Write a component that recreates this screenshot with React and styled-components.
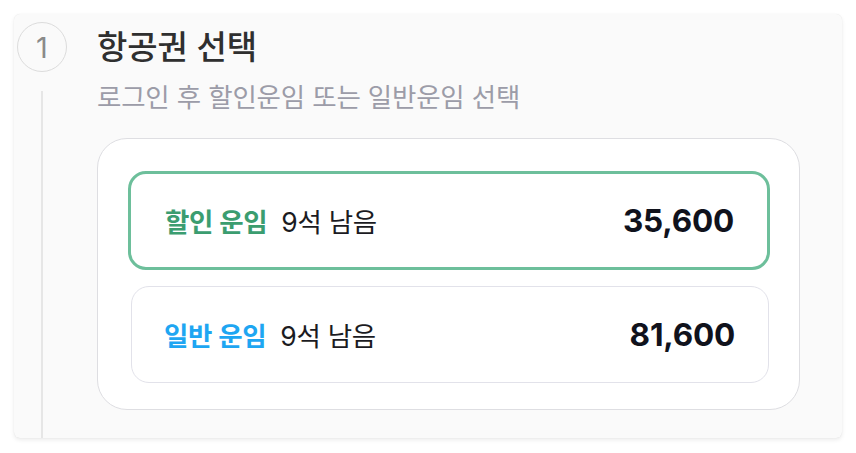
import React from 'react'
import styled, { createGlobalStyle } from 'styled-components'

const Global = createGlobalStyle`
  html, body {
    margin: 0;
    padding: 0;
    background: #ffffff;
  }
  body {
    font-family: "Inter", "Noto Sans CJK KR", "Noto Sans", sans-serif;
    -webkit-font-smoothing: antialiased;
  }
`

const Page = styled.div`
  width: 856px;
  height: 453px;
  padding: 14px;
  box-sizing: border-box;
`

const Panel = styled.section`
  width: 828px;
  height: 424px;
  box-sizing: border-box;
  background: #fafafa;
  border-radius: 6px;
  box-shadow: 0 2px 4px rgba(0, 0, 0, 0.08), 0 0 1px rgba(0, 0, 0, 0.1);
  padding: 8px 42px 0 3px;
  display: flex;
  gap: 30px;
`

const StepRail = styled.div`
  width: 50px;
  display: flex;
  flex-direction: column;
  align-items: center;
`

const StepBadge = styled.div`
  width: 50px;
  height: 50px;
  box-sizing: border-box;
  border: 1.5px solid #dcdcdc;
  border-radius: 50%;
  display: flex;
  align-items: center;
  justify-content: center;
  color: #8a8a8a;
  font-size: 29px;
  font-weight: 400;
`

const RailLine = styled.div`
  flex: 1;
  width: 2px;
  margin-top: 19px;
  background: #e6e6e6;
`

const Content = styled.div`
  flex: 1;
  padding-bottom: 30px;
`

const Title = styled.h2`
  margin: 0;
  height: 50px;
  line-height: 50px;
  font-size: 33px;
  font-weight: 500;
  color: #2f2f2f;
  letter-spacing: -0.1px;
`

const Subtitle = styled.p`
  margin: 8px 0 0;
  line-height: 34px;
  font-size: 26.5px;
  font-weight: 400;
  color: #9c9ca8;
  letter-spacing: -0.2px;
`

const FareCard = styled.div`
  margin-top: 24px;
  width: 703px;
  box-sizing: border-box;
  background: #ffffff;
  border: 1px solid #dedee2;
  border-radius: 30px;
  padding: 32px 29px 26px 30px;
  display: flex;
  flex-direction: column;
  gap: 16px;
`

const FareOption = styled.button`
  all: unset;
  box-sizing: border-box;
  height: ${p => (p.$selected ? '99px' : '97px')};
  margin: ${p => (p.$selected ? '0' : '0 1px 0 3px')};
  border: ${p => (p.$selected ? '3px solid #6dbf9b' : '1.5px solid #e2e2ea')};
  border-radius: 18px;
  background: #ffffff;
  display: flex;
  align-items: center;
  justify-content: space-between;
  padding: ${p => (p.$selected ? '0 33px 0 34px' : '0 33px 0 32px')};
  cursor: pointer;
`

const FareLabel = styled.div`
  display: flex;
  align-items: baseline;
  gap: 14px;
  font-size: 26.5px;
  letter-spacing: -0.3px;
`

const FareName = styled.span`
  font-weight: 700;
  color: ${p => p.$color};
`

const Seats = styled.span`
  font-weight: 400;
  color: #1b1b22;
`

const Price = styled.span`
  font-size: 31.5px;
  font-weight: 700;
  color: #10121c;
  letter-spacing: -0.2px;
`

const fares = [
  { name: '할인 운임', color: '#3b9d70', seats: '9석 남음', price: '35,600', selected: true },
  { name: '일반 운임', color: '#1ea6f2', seats: '9석 남음', price: '81,600', selected: false },
]

const App = () => {
  return (
    <Page>
      <Global />
      <Panel>
        <StepRail>
          <StepBadge>1</StepBadge>
          <RailLine />
        </StepRail>
        <Content>
          <Title>항공권 선택</Title>
          <Subtitle>로그인 후 할인운임 또는 일반운임 선택</Subtitle>
          <FareCard>
            {fares.map(f => (
              <FareOption key={f.name} $selected={f.selected}>
                <FareLabel>
                  <FareName $color={f.color}>{f.name}</FareName>
                  <Seats>{f.seats}</Seats>
                </FareLabel>
                <Price>{f.price}</Price>
              </FareOption>
            ))}
          </FareCard>
        </Content>
      </Panel>
    </Page>
  )
}

export default App
